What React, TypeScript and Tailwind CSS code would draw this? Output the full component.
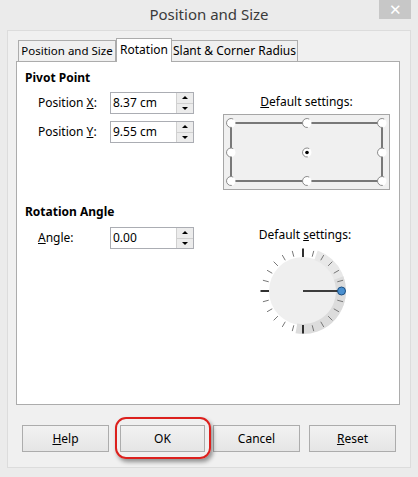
import React from "react";

const C = 48;
const rad = (d: number) => (d * Math.PI) / 180;
const pt = (r: number, d: number) => [C + r * Math.cos(rad(d)), C - r * Math.sin(rad(d))];

function annulus(r1: number, r2: number, a1: number, a2: number) {
  const [ox1, oy1] = pt(r2, a1);
  const [ox2, oy2] = pt(r2, a2);
  const [ix2, iy2] = pt(r1, a2);
  const [ix1, iy1] = pt(r1, a1);
  const large = Math.abs(a1 - a2) > 180 ? 1 : 0;
  return `M${ox1} ${oy1} A${r2} ${r2} 0 ${large} 1 ${ox2} ${oy2} L${ix2} ${iy2} A${r1} ${r1} 0 ${large} 0 ${ix1} ${iy1} Z`;
}

function Dial() {
  const ticks = [];
  for (let i = 1; i < 24; i++) {
    const d = i * 15;
    const major = d % 90 === 0;
    const [x1, y1] = pt(major ? 34 : 35.5, d);
    const [x2, y2] = pt(major ? 42.5 : 41.5, d);
    ticks.push(
      <line
        key={i}
        x1={x1}
        y1={y1}
        x2={x2}
        y2={y2}
        stroke={major ? "#1a1a1a" : "#777777"}
        strokeWidth={major ? 1.8 : 1}
      />
    );
  }
  return (
    <svg width="96" height="96" viewBox="0 0 96 96">
      <circle cx={C} cy={C} r={34} fill="#efefef" />
      <path d={annulus(33, 43, 70, -20)} fill="#e8e8e8" />
      <path d={annulus(33, 43, 20, -100)} fill="#dcdcdc" />
      {ticks}
      <line x1={C} y1={C} x2={C + 38} y2={C} stroke="#000" strokeWidth={1.5} />
      <circle cx={C + 38.5} cy={C} r={4} fill="#4a90d0" stroke="#1d4f82" strokeWidth={1} />
    </svg>
  );
}

function Radio({ x, y, checked }: { x: number; y: number; checked?: boolean }) {
  const r = 4.5;
  const sx = x + r * Math.cos(rad(-60));
  const sy = y + r * Math.sin(rad(-60));
  const ex = x + r * Math.cos(rad(80));
  const ey = y + r * Math.sin(rad(80));
  return (
    <g>
      <circle cx={x} cy={y} r={r} fill="#ffffff" />
      <path d={`M${sx} ${sy} A${r} ${r} 0 1 0 ${ex} ${ey}`} fill="none" stroke="#8a8a8a" strokeWidth={1} />
      {checked && <circle cx={x} cy={y} r={1.8} fill="#000" />}
    </g>
  );
}

function PivotBox() {
  const xs = [7, 83, 158];
  const ys = [8, 37.5, 66];
  return (
    <div className="w-[167px] h-[76px] border border-[#a6a6a6] bg-[#f0f0f0]">
      <svg width="165" height="74" viewBox="0 0 165 74">
        <rect x={xs[0]} y={ys[0]} width={xs[2] - xs[0]} height={ys[2] - ys[0]} fill="none" stroke="#000" strokeWidth={1} />
        {ys.map((y, j) =>
          xs.map((x, i) => <Radio key={`${i}-${j}`} x={x} y={y} checked={i === 1 && j === 1} />)
        )}
      </svg>
    </div>
  );
}

function Spin({ value }: { value: string }) {
  return (
    <div className="w-[84px] h-[22px] border border-[#abadb3] bg-white flex">
      <div className="flex-1 pl-[2px] flex items-center text-[12px] text-black leading-none">{value}</div>
      <div className="w-[17px] flex flex-col border-l border-[#d0d0d0] bg-[#ececec]">
        <div className="flex-1 flex items-center justify-center border-b border-[#d0d0d0]">
          <div className="w-0 h-0 border-l-[3px] border-r-[3px] border-b-[3px] border-l-transparent border-r-transparent border-b-black" />
        </div>
        <div className="flex-1 flex items-center justify-center">
          <div className="w-0 h-0 border-l-[3px] border-r-[3px] border-t-[3px] border-l-transparent border-r-transparent border-t-black" />
        </div>
      </div>
    </div>
  );
}

function Btn({ children, w }: { children: React.ReactNode; w: string }) {
  return (
    <div
      className={`${w} h-[27px] border border-[#acacac] bg-gradient-to-b from-[#f2f2f2] to-[#e5e5e5] flex items-center justify-center text-[12px] text-black`}
    >
      {children}
    </div>
  );
}

export default function App() {
  return (
    <div className="w-[418px] h-[477px] bg-[#ebebeb] flex flex-col font-['Noto_Sans',sans-serif] text-black">
      {/* title bar */}
      <div className="h-[30px] flex items-start">
        <div className="w-[39px]" />
        <div className="flex-1 h-[28px] flex items-center justify-center text-[15px] text-[#3a3a3a]">
          Position and Size
        </div>
        <div className="w-[32px] h-[19px] bg-[#c7c7c7] flex items-center justify-center text-white text-[15px] leading-none">
          ✕
        </div>
        <div className="w-[7px]" />
      </div>

      {/* client area */}
      <div className="mx-[7px] h-[438px] border border-[#dcdcdc] bg-[#f0f0f0] flex flex-col">
        {/* tabs */}
        <div className="mt-[7px] ml-[10px] h-[23px] flex items-end relative z-10">
          <div className="w-[98px] h-[21px] border border-b-0 border-[#acacac] bg-[#f0f0f0] flex items-center justify-center text-[11.5px] whitespace-nowrap overflow-hidden">
            Position and Size
          </div>
          <div className="w-[56px] h-[24px] -mb-px border border-b-0 border-[#acacac] bg-white flex items-center justify-center text-[12px] pb-[2px]">
            Rotation
          </div>
          <div className="w-[126px] h-[21px] border border-b-0 border-l-0 border-[#acacac] bg-[#f0f0f0] flex items-center justify-center text-[12px] whitespace-nowrap">
            Slant &amp; Corner Radius
          </div>
        </div>

        {/* tab page */}
        <div className="ml-[8px] w-[384px] h-[344px] border border-[#acacac] bg-white pl-[8px] pt-[8px] flex flex-col">
          {/* pivot section */}
          <div className="flex">
            <div className="w-[198px] flex flex-col">
              <div className="h-[16px] text-[12px] font-bold leading-[16px]">Pivot Point</div>
              <div className="mt-[6px] flex items-center">
                <div className="ml-[13px] w-[72px] text-[12px]">
                  Position <span className="underline">X</span>:
                </div>
                <Spin value="8.37 cm" />
              </div>
              <div className="mt-[7px] flex items-center">
                <div className="ml-[13px] w-[72px] text-[12px]">
                  Position <span className="underline">Y</span>:
                </div>
                <Spin value="9.55 cm" />
              </div>
            </div>
            <div className="flex flex-col">
              <div className="mt-[24px] h-[16px] w-[167px] text-center text-[12px] leading-[16px]">
                <span className="underline">D</span>efault settings:
              </div>
              <div className="mt-[4px]">
                <PivotBox />
              </div>
            </div>
          </div>

          {/* rotation section */}
          <div className="mt-[14px] flex">
            <div className="w-[198px] flex flex-col">
              <div className="h-[16px] text-[12px] font-bold leading-[16px]">Rotation Angle</div>
              <div className="mt-[7px] flex items-center">
                <div className="ml-[13px] w-[72px] text-[12px]">
                  <span className="underline">A</span>ngle:
                </div>
                <Spin value="0.00" />
              </div>
            </div>
            <div className="flex flex-col">
              <div className="mt-[23px] h-[16px] w-[164px] text-center text-[12px] leading-[16px]">
                Default <span className="underline">s</span>ettings:
              </div>
              <div className="ml-[32px]">
                <Dial />
              </div>
            </div>
          </div>
        </div>

        {/* buttons */}
        <div className="mt-[20px] flex">
          <div className="ml-[14px]">
            <Btn w="w-[87px]">
              <span>
                <span className="underline">H</span>elp
              </span>
            </Btn>
          </div>
          <div className="ml-[11px] relative">
            <Btn w="w-[85px]">OK</Btn>
            <div className="absolute left-[-5px] top-[-8px] w-[96px] h-[42px] rounded-[11px] border-[2.5px] border-[#dc201d] shadow-[2px_3px_4px_rgba(0,0,0,0.4)]" />
          </div>
          <div className="ml-[8px]">
            <Btn w="w-[87px]">Cancel</Btn>
          </div>
          <div className="ml-[9px]">
            <Btn w="w-[87px]">
              <span>
                <span className="underline">R</span>eset
              </span>
            </Btn>
          </div>
        </div>
      </div>
    </div>
  );
}
